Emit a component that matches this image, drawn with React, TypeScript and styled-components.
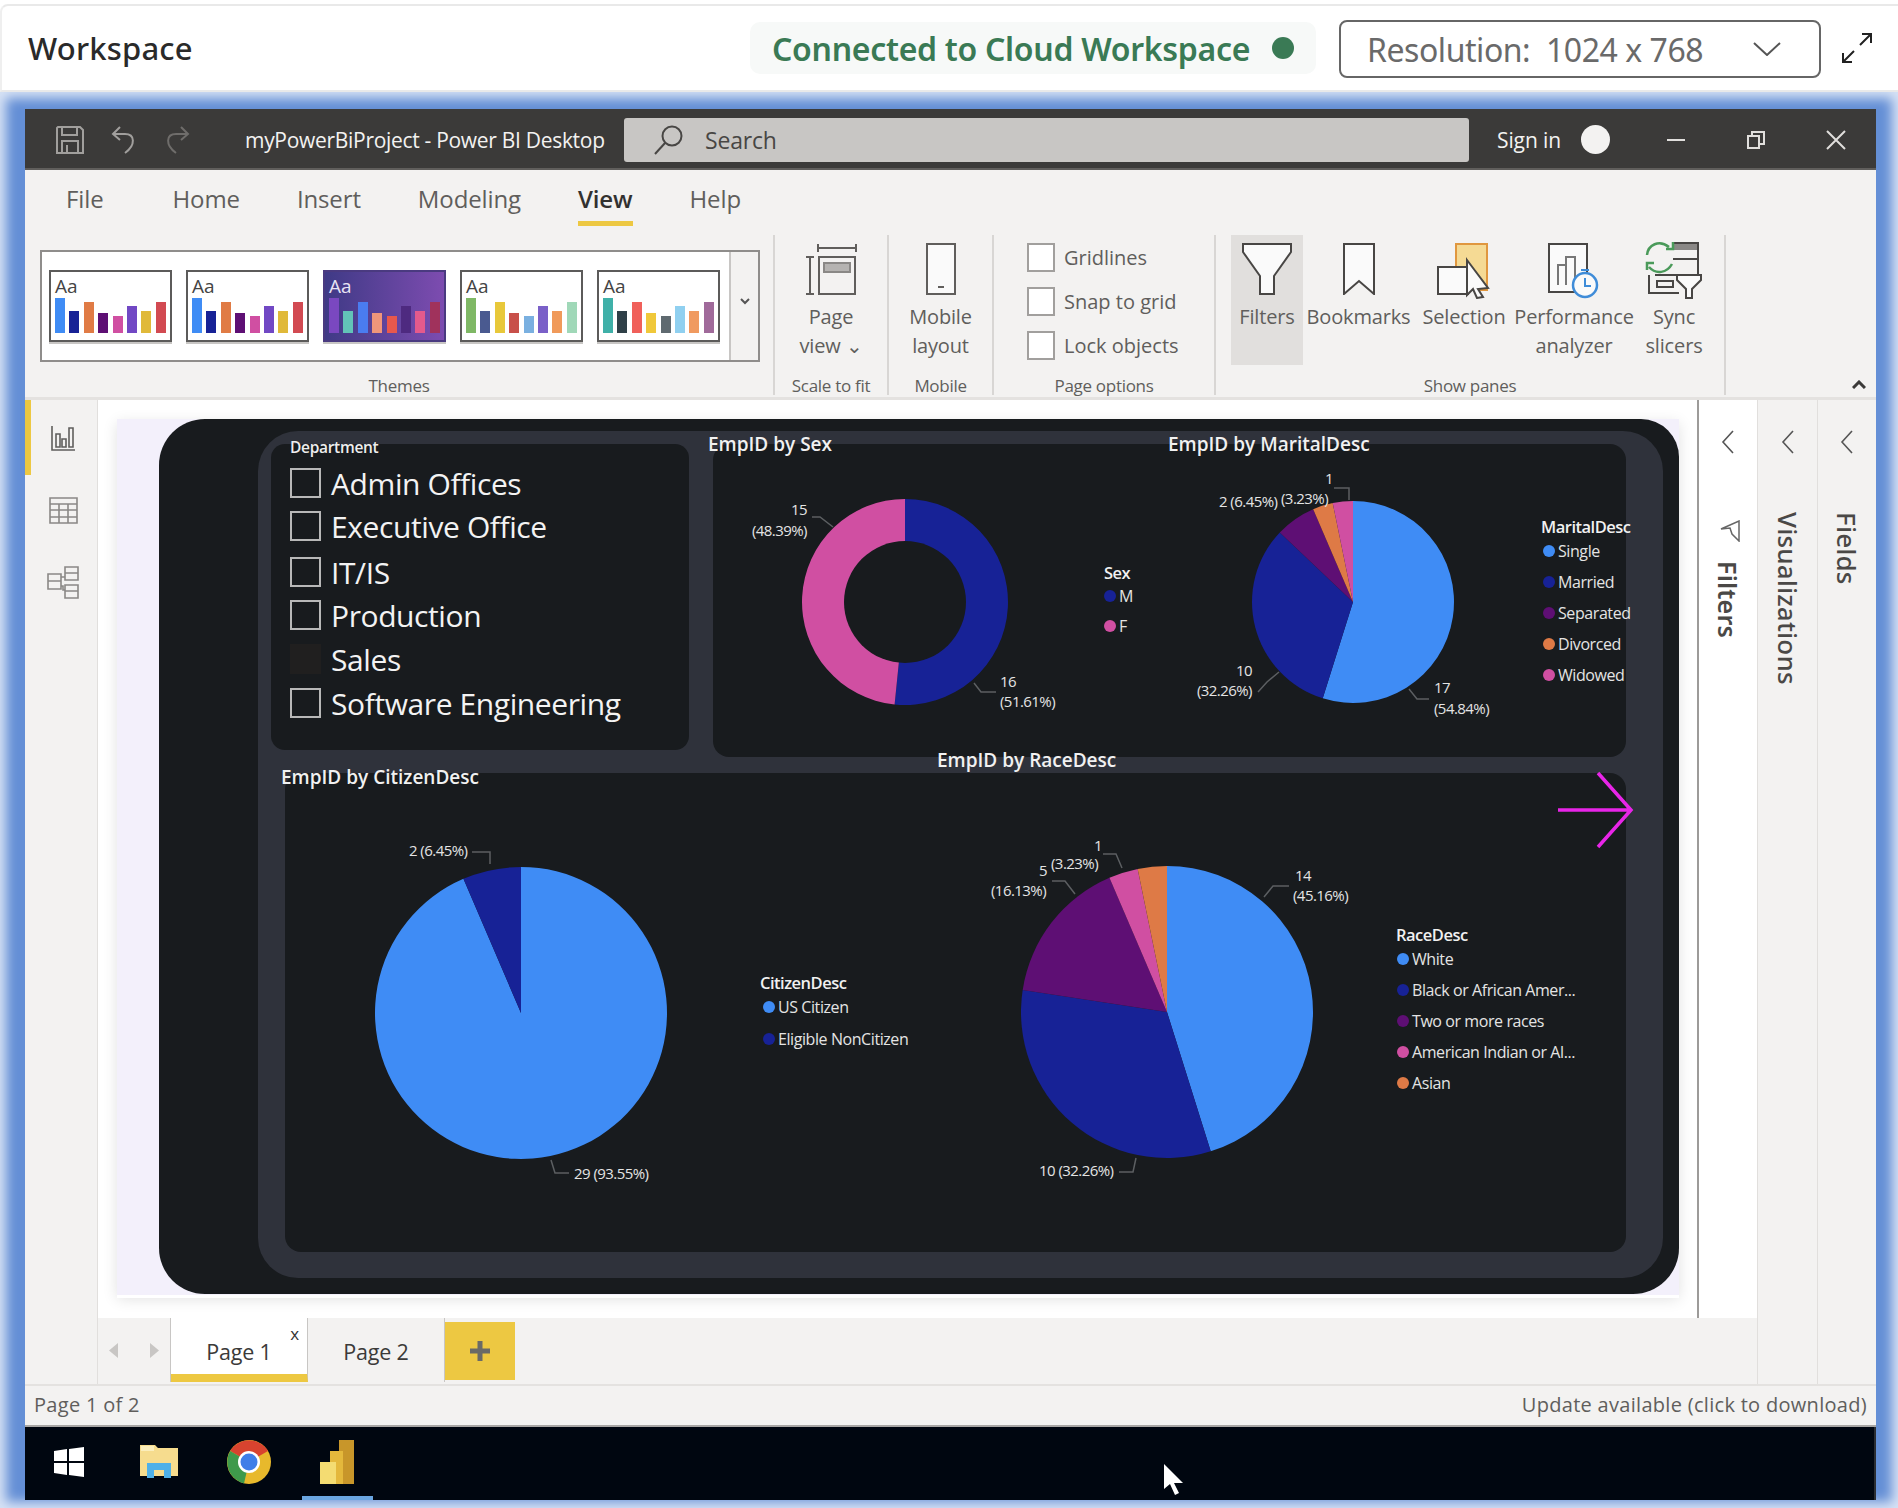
import React from "react";
import styled, { createGlobalStyle } from "styled-components";

const GlobalStyle = createGlobalStyle`
  html, body { margin: 0; padding: 0; background: #fff; }
  * { box-sizing: border-box; }
  body { font-family: "Open Sans", "Noto Sans", sans-serif; }
`;

const C = {
  sky: "#3f8cf5",
  navy: "#172296",
  purple: "#5e0f74",
  orange: "#de7a46",
  pink: "#d04fa2",
  dark: "#181b1e",
  slate: "#2f323b",
  ribbon: "#f3f2f1",
  text: "#605e5c",
  gold: "#edc842",
};

const Page = styled.div`
  width: 1898px;
  height: 1508px;
  padding-top: 4px;
  background: #fff;
  overflow: hidden;
`;

const Header = styled.header`
  height: 88px;
  display: flex;
  align-items: center;
  padding: 0 26px 0 28px;
  border-top: 2px solid #e9e9e9;
  border-bottom: 2px solid #e9e9e9;
  border-left: 2px solid #efefef;
  border-top-left-radius: 8px;
`;

const WorkspaceTitle = styled.h1`
  margin: 0 0 0 -2px;
  font-family: "Noto Sans", sans-serif;
  font-size: 31px;
  font-weight: 500;
  letter-spacing: 0.2px;
  color: #2a2a2a;
`;

const StatusPill = styled.div`
  margin-left: auto;
  width: 566px;
  height: 52px;
  display: flex;
  align-items: center;
  padding-left: 22px;
  gap: 22px;
  background: #f7f9f8;
  border-radius: 10px;
`;

const StatusText = styled.span`
  font-family: "Noto Sans", sans-serif;
  font-size: 32px;
  font-weight: 600;
  letter-spacing: -0.3px;
  color: #3a7a55;
  white-space: nowrap;
`;

const StatusDot = styled.span`
  width: 22px;
  height: 22px;
  border-radius: 50%;
  background: #3a7a55;
`;

const ResolutionBox = styled.div`
  width: 482px;
  height: 58px;
  margin: 2px 0 0 23px;
  display: flex;
  align-items: center;
  justify-content: space-between;
  padding: 0 38px 0 26px;
  border: 2px solid #666;
  border-radius: 8px;
  font-family: "Noto Sans", sans-serif;
  font-size: 32px;
  letter-spacing: -0.45px;
  color: #6a6a6a;
  white-space: pre;
`;

const ExpandButton = styled.div`
  margin-left: 21px;
  display: flex;
`;

const Frame = styled.div`
  height: 1416px;
  padding: 17px 22px 10px 25px;
  background: #648fd6;
  box-shadow: inset 0 0 12px 6px rgba(255, 255, 255, 0.75);
`;

const Window = styled.div`
  height: 1389px;
  display: flex;
  flex-direction: column;
  background: ${C.ribbon};
`;

const TitleBar = styled.div`
  height: 61px;
  flex: none;
  display: flex;
  align-items: center;
  padding: 2px 0 0 31px;
  background: #3b3a39;
  border-bottom: 2px solid #605e5c;
`;

const QuickIcons = styled.div`
  width: 137px;
  display: flex;
  align-items: center;
  gap: 27px;
`;

const AppTitle = styled.div`
  width: 431px;
  padding: 1px 0 0 52px;
  font-size: 21px;
  letter-spacing: -0.3px;
  color: #f3f2f1;
  white-space: nowrap;
`;

const SearchBox = styled.div`
  width: 845px;
  height: 44px;
  display: flex;
  align-items: center;
  gap: 21px;
  padding-left: 30px;
  background: #c8c6c4;
  border-radius: 3px;
  font-size: 23px;
  letter-spacing: -0.2px;
  color: #484644;
`;

const SignIn = styled.div`
  width: 84px;
  margin-left: 28px;
  padding-top: 1px;
  font-size: 21px;
  letter-spacing: -0.1px;
  color: #f3f2f1;
`;

const Avatar = styled.span`
  width: 29px;
  height: 29px;
  border-radius: 50%;
  background: #f3f2f1;
`;

const WinControls = styled.div`
  margin-left: auto;
  display: flex;
`;

const WinButton = styled.div`
  width: 80px;
  display: flex;
  align-items: center;
  justify-content: center;
`;

const Ribbon = styled.div`
  height: 230px;
  flex: none;
  border-bottom: 3px solid #e4e2e0;
`;

const MenuRow = styled.nav`
  height: 65px;
  display: flex;
  gap: 57px;
  padding: 12px 0 0 41px;
`;

const MenuItem = styled.div<{ $active?: boolean }>`
  height: 44px;
  font-size: 24px;
  line-height: 33px;
  letter-spacing: -0.12px;
  color: ${(p) => (p.$active ? "#323130" : C.text)};
  font-weight: ${(p) => (p.$active ? 600 : 400)};
  border-bottom: ${(p) => (p.$active ? `5px solid ${C.gold}` : "none")};
  &:first-child {
    margin-right: 12px;
  }
`;

const RibbonRow = styled.div`
  height: 162px;
  display: flex;
`;

const Group = styled.section<{ $w: number; $pl?: number; $pr?: number }>`
  width: ${(p) => p.$w}px;
  height: 160px;
  padding: 0 ${(p) => p.$pr ?? 0}px 0 ${(p) => p.$pl ?? 0}px;
  display: flex;
  flex-direction: column;
  border-right: 2px solid #d8d6d4;
`;

const GroupBody = styled.div`
  flex: 1;
  display: flex;
`;

const GroupLabel = styled.div`
  height: 22px;
  margin-bottom: -2px;
  text-align: center;
  font-size: 17px;
  line-height: 22px;
  letter-spacing: -0.3px;
  color: ${C.text};
  white-space: nowrap;
`;

const ThemeBox = styled.div`
  width: 720px;
  height: 112px;
  margin-top: 15px;
  flex: none;
  display: flex;
  padding-top: 18px;
  padding-left: 7px;
  gap: 14px;
  position: relative;
  background: #fff;
  border: 2px solid #8f8d8b;
`;

const ThemeThumb = styled.div<{ $dark?: boolean }>`
  width: 123px;
  height: 72px;
  display: flex;
  flex-direction: column;
  padding: 3px 3px 7px 4px;
  background: ${(p) => (p.$dark ? "linear-gradient(90deg, #3f3a86, #7d4cb0)" : "#fff")};
  border: 2px solid ${(p) => (p.$dark ? "#4a3a80" : "#5c5b5a")};
  box-shadow: 0 2px 0 #c8c6c4;
`;

const ThemeAa = styled.span<{ $dark?: boolean }>`
  height: 23px;
  font-size: 19px;
  line-height: 23px;
  color: ${(p) => (p.$dark ? "#e8e4f4" : "#444")};
`;

const ThemeBars = styled.div`
  flex: 1;
  display: flex;
  align-items: flex-end;
  gap: 4.4px;
`;

const ThemeBar = styled.span<{ $h: number; $c: string }>`
  width: 10px;
  height: ${(p) => p.$h}px;
  background: ${(p) => p.$c};
`;

const ThemeMore = styled.div`
  width: 29px;
  position: absolute;
  top: 0;
  right: 0;
  bottom: 0;
  display: flex;
  align-items: center;
  justify-content: center;
  padding-bottom: 10px;
  background: ${C.ribbon};
  border-left: 2px solid #c8c6c4;
`;

const LargeButton = styled.div<{ $w: number; $on?: boolean }>`
  width: ${(p) => p.$w}px;
  height: 130px;
  flex: none;
  display: flex;
  flex-direction: column;
  align-items: center;
  padding-top: 8px;
  background: ${(p) => (p.$on ? "#e1dfdd" : "transparent")};
`;

const IconSlot = styled.div`
  height: 59px;
  display: flex;
  align-items: flex-start;
  justify-content: center;
`;

const ButtonText = styled.div`
  font-size: 20px;
  line-height: 29px;
  letter-spacing: -0.15px;
  text-align: center;
  color: ${C.text};
  white-space: nowrap;
`;

const CheckList = styled.div`
  display: flex;
  flex-direction: column;
  gap: 15px;
  padding: 8px 0 0 33px;
`;

const CheckRow = styled.label`
  height: 29px;
  display: flex;
  align-items: center;
  gap: 9px;
  font-size: 20px;
  letter-spacing: 0;
  color: ${C.text};
`;

const CheckBox = styled.span`
  width: 28px;
  height: 29px;
  background: #fff;
  border: 2px solid #a19f9d;
`;

const CollapseRibbon = styled.div`
  margin-left: auto;
  margin-right: 10px;
  align-self: flex-end;
  padding-bottom: 8px;
  display: flex;
`;

const Workarea = styled.div`
  flex: 1;
  display: grid;
  grid-template-columns: 73px 1601px 58px 60px 59px;
  grid-template-rows: 918px 66px;
  border-bottom: 2px solid #e4e2e0;
`;

const Rail = styled.aside`
  grid-column: 1;
  grid-row: 1 / span 2;
  border-right: 1px solid #e1dfdd;
`;

const RailItem = styled.div<{ $active?: boolean; $h: number }>`
  height: ${(p) => p.$h}px;
  display: flex;
  align-items: center;
  justify-content: center;
  border-left: 6px solid ${(p) => (p.$active ? C.gold : "transparent")};
  padding-right: 2px;
`;

const CanvasArea = styled.main`
  grid-column: 2;
  grid-row: 1;
  padding: 19px 18px 23px 19px;
  background: #fff;
  border-right: 2px solid #9d9b99;
`;

const ReportPage = styled.div`
  height: 876px;
  padding-left: 42px;
  background: #f3f0fb;
  box-shadow: 0 3px 0 #fff, 0 4px 14px rgba(0, 0, 0, 0.12);
`;

const ReportBack = styled.div`
  height: 875px;
  padding: 12px 16px 16px 99px;
  background: ${C.dark};
  border-radius: 46px 38px 46px 46px;
`;

const ReportInner = styled.div`
  height: 847px;
  position: relative;
  display: flex;
  flex-direction: column;
  gap: 16px;
  padding: 13px 37px 0 13px;
  background: ${C.slate};
  border-radius: 40px;
`;

const TopRow = styled.div`
  height: 313px;
  display: flex;
  gap: 24px;
  align-items: flex-start;
`;

const SlicerCard = styled.div`
  width: 418px;
  height: 306px;
  flex: none;
  padding: 0 0 0 19px;
  background: ${C.dark};
  border-radius: 14px;
`;

const SlicerTitle = styled.div`
  height: 24px;
  font-size: 15.5px;
  line-height: 7px;
  font-weight: 600;
  letter-spacing: -0.3px;
  color: #eee;
`;

const SlicerRow = styled.div<{ $gap: number }>`
  height: 30px;
  margin-bottom: ${(p) => p.$gap}px;
  display: flex;
  align-items: center;
  gap: 10px;
  font-size: 30px;
  letter-spacing: -0.4px;
  color: #f3f3f3;
  white-space: nowrap;
`;

const SlicerBox = styled.span<{ $muted?: boolean }>`
  width: 31px;
  height: 30px;
  background: ${(p) => (p.$muted ? "#201f1f" : "transparent")};
  border: ${(p) => (p.$muted ? "none" : "2px solid #b8b8b8")};
`;

const ChartCard = styled.div<{ $w: number; $h: number }>`
  width: ${(p) => p.$w}px;
  height: ${(p) => p.$h}px;
  flex: none;
  display: flex;
  background: ${C.dark};
  border-radius: 16px;
`;

const BottomCard = styled(ChartCard)`
  margin-left: 14px;
`;

const Visual = styled.div<{ $w: number }>`
  width: ${(p) => p.$w}px;
  flex: none;
`;

const VisualTitle = styled.div<{ $top: number; $left?: number }>`
  height: 21px;
  margin-top: ${(p) => p.$top}px;
  margin-left: ${(p) => p.$left ?? 0}px;
  font-size: 19px;
  line-height: 20px;
  font-weight: 600;
  letter-spacing: 0;
  color: #f1f1f1;
  white-space: nowrap;
`;

const VisualBody = styled.div`
  display: flex;
  align-items: flex-start;
  svg {
    display: block;
    flex: none;
    overflow: visible;
  }
`;

const Legend = styled.div<{ $top: number; $pl: number }>`
  margin-top: ${(p) => p.$top}px;
  flex: none;
  --legend-pl: ${(p) => p.$pl}px;
`;

const LegendTitle = styled.div`
  height: 20px;
  margin-bottom: -2px;
  font-size: 16.5px;
  line-height: 20px;
  font-weight: 600;
  letter-spacing: -0.5px;
  color: #f1f1f1;
  white-space: nowrap;
`;

const LegendItem = styled.div<{ $pitch: number }>`
  height: ${(p) => p.$pitch}px;
  display: flex;
  align-items: center;
  padding-left: var(--legend-pl);
  gap: 3px;
  font-size: 16px;
  letter-spacing: -0.42px;
  color: #e4e4e4;
  white-space: nowrap;
`;

const LegendDot = styled.span<{ $c: string }>`
  width: 12px;
  height: 12px;
  flex: none;
  border-radius: 50%;
  background: ${(p) => p.$c};
`;

const PieText = styled.text`
  font-size: 15px;
  letter-spacing: -0.55px;
  fill: #e4e4e4;
  dominant-baseline: middle;
`;

const Leader = styled.polyline`
  fill: none;
  stroke: #5c5f62;
  stroke-width: 1.5;
`;

const NextArrow = styled.svg`
  position: absolute;
  left: 1299px;
  top: 340px;
`;

const Pane = styled.aside<{ $bg: string; $col: number; $span?: boolean }>`
  grid-column: ${(p) => p.$col};
  grid-row: ${(p) => (p.$span ? "1 / span 2" : "1")};
  display: flex;
  flex-direction: column;
  align-items: center;
  padding-top: 30px;
  background: ${(p) => p.$bg};
  border-left: ${(p) => (p.$span ? "1px solid #e1dfdd" : "none")};
`;

const PaneLabel = styled.div<{ $top: number; $bold?: boolean }>`
  margin-top: ${(p) => p.$top}px;
  writing-mode: vertical-rl;
  font-family: "Noto Sans", sans-serif;
  font-size: ${(p) => (p.$bold ? 25 : 26)}px;
  line-height: 30px;
  font-weight: ${(p) => (p.$bold ? 600 : 500)};
  letter-spacing: 0.2px;
  color: #4a4846;
`;

const PaneIcon = styled.div`
  margin: 66px 0 0 4px;
  display: flex;
`;

const PageTabs = styled.div`
  grid-column: 2 / span 2;
  grid-row: 2;
  display: flex;
  align-items: flex-start;
  background: ${C.ribbon};
`;

const TabNav = styled.div`
  width: 73px;
  height: 64px;
  display: flex;
  align-items: center;
  justify-content: center;
  gap: 32px;
  border-right: 1px solid #c8c6c4;
`;

const PageTab = styled.div<{ $active?: boolean }>`
  width: 137px;
  height: 64px;
  position: relative;
  display: flex;
  justify-content: center;
  padding-top: 19px;
  font-size: 21.5px;
  line-height: 29px;
  letter-spacing: -0.2px;
  color: #3b3a39;
  background: ${(p) => (p.$active ? "#fff" : "transparent")};
  border-right: 1px solid #c8c6c4;
  border-bottom: ${(p) => (p.$active ? `8px solid ${C.gold}` : "none")};
`;

const TabClose = styled.span`
  position: absolute;
  top: 7px;
  right: 8px;
  font-size: 17px;
  line-height: 17px;
  color: #333;
`;

const AddTab = styled.div`
  width: 70px;
  height: 58px;
  margin-top: 4px;
  display: flex;
  align-items: center;
  justify-content: center;
  background: ${C.gold};
`;

const StatusBar = styled.footer`
  height: 41px;
  flex: none;
  display: flex;
  align-items: center;
  justify-content: space-between;
  padding: 0 9px 2px 9px;
  border-bottom: 2px solid #a8a6a4;
  font-size: 20px;
  letter-spacing: 0.3px;
  color: ${C.text};
`;

const Taskbar = styled.div`
  height: 73px;
  flex: none;
  position: relative;
  display: grid;
  grid-template-columns: 88px 92px 88px 88px;
  background: #000610;
  border-right: 2px solid #2b2d31;
`;

const TaskItem = styled.div<{ $active?: boolean }>`
  height: 73px;
  display: flex;
  align-items: center;
  justify-content: center;
  position: relative;
  padding-bottom: 4px;
  &::after {
    content: "";
    display: ${(p) => (p.$active ? "block" : "none")};
    position: absolute;
    left: 9px;
    right: 8px;
    bottom: 0;
    height: 4px;
    background: #6aa5e0;
  }
`;

const MousePointer = styled.svg`
  position: absolute;
  left: 1138px;
  top: 37px;
`;

type Slice = { pct: number; color: string };

const polar = (cx: number, cy: number, r: number, pct: number) => {
  const a = (pct / 100) * Math.PI * 2;
  return `${cx + r * Math.sin(a)} ${cy - r * Math.cos(a)}`;
};

function Pie({ cx, cy, r, slices }: { cx: number; cy: number; r: number; slices: Slice[] }) {
  let start = 0;
  return (
    <>
      {slices.map((s) => {
        const end = start + s.pct;
        const d = `M${cx} ${cy}L${polar(cx, cy, r, start)}A${r} ${r} 0 ${s.pct > 50 ? 1 : 0} 1 ${polar(cx, cy, r, end)}Z`;
        start = end;
        return <path key={s.color} d={d} fill={s.color} />;
      })}
    </>
  );
}

const themes = [
  { colors: [C.sky, C.navy, "#e07b45", C.purple, C.pink, "#7148c4", "#e0b93a", "#d24a52"] },
  { colors: [C.sky, C.navy, "#e07b45", C.purple, C.pink, "#7148c4", "#e0b93a", "#d24a52"] },
  { dark: true, colors: ["#7a48c0", "#62c3b8", "#4a7cf0", "#f0967a", "#e8584c", "#4e2a80", "#e45a8c", "#a0325c"] },
  { colors: ["#7fb865", "#4a5a90", "#e8c83a", "#c8504a", "#7ab0e0", "#7a60c8", "#f09a5a", "#a0d8b8"] },
  { colors: ["#3fb0a8", "#2f4048", "#f0605a", "#f0c83a", "#5f6a70", "#90d0f0", "#f09a60", "#a06a9a"] },
];
const barHeights = [35, 22, 31, 20, 17, 27, 22, 31];

const departments = [
  { name: "Admin Offices", gap: 13 },
  { name: "Executive Office", gap: 16 },
  { name: "IT/IS", gap: 13 },
  { name: "Production", gap: 14 },
  { name: "Sales", gap: 14, muted: true },
  { name: "Software Engineering", gap: 0 },
];

const stroke = "#605e5c";

function App() {
  return (
    <Page>
      <GlobalStyle />
      <Header>
        <WorkspaceTitle>Workspace</WorkspaceTitle>
        <StatusPill>
          <StatusText>Connected to Cloud Workspace</StatusText>
          <StatusDot />
        </StatusPill>
        <ResolutionBox>
          <span>Resolution:  1024 x 768</span>
          <svg width="28" height="14" viewBox="0 0 28 14" fill="none" stroke="#555" strokeWidth="2">
            <path d="M1 1l13 12L27 1" />
          </svg>
        </ResolutionBox>
        <ExpandButton>
          <svg width="30" height="30" viewBox="0 0 30 30" fill="none" stroke="#222" strokeWidth="2">
            <path d="M18 12L29 1M20 1h9v9M12 18L1 29M1 20v9h9" />
          </svg>
        </ExpandButton>
      </Header>

      <Frame>
        <Window>
          <TitleBar>
            <QuickIcons>
              <svg width="28" height="28" viewBox="0 0 28 28" fill="none" stroke="#a19f9d" strokeWidth="2">
                <path d="M2 1h22l3 3v23H1V2zM6 1v8h15V1M6 27V15h16v12M11 19v8" />
              </svg>
              <svg width="26" height="28" viewBox="0 0 26 28" fill="none" stroke="#a19f9d" strokeWidth="2">
                <path d="M9 1L2 8l7 6M2 8h12c10 0 11 11 0 19" />
              </svg>
              <svg width="26" height="28" viewBox="0 0 26 28" fill="none" stroke="#6f6d6b" strokeWidth="2">
                <path d="M17 1l7 7-7 6M24 8H12C2 8 1 19 12 27" />
              </svg>
            </QuickIcons>
            <AppTitle>myPowerBiProject - Power BI Desktop</AppTitle>
            <SearchBox>
              <svg width="30" height="30" viewBox="0 0 30 30" fill="none" stroke="#484644" strokeWidth="2">
                <circle cx="18" cy="11" r="9.5" />
                <path d="M11 18L1 29" />
              </svg>
              Search
            </SearchBox>
            <SignIn>Sign in</SignIn>
            <Avatar />
            <WinControls>
              <WinButton>
                <svg width="20" height="4" viewBox="0 0 20 4"><path d="M1 2h18" stroke="#e1dfdd" strokeWidth="2" /></svg>
              </WinButton>
              <WinButton>
                <svg width="18" height="18" viewBox="0 0 18 18" fill="none" stroke="#e1dfdd" strokeWidth="2">
                  <path d="M1 5h11v12H1zM5 5V1h12v12h-5" />
                </svg>
              </WinButton>
              <WinButton>
                <svg width="20" height="20" viewBox="0 0 20 20" stroke="#e1dfdd" strokeWidth="2">
                  <path d="M1 1l18 18M19 1L1 19" />
                </svg>
              </WinButton>
            </WinControls>
          </TitleBar>

          <Ribbon>
            <MenuRow>
              <MenuItem>File</MenuItem>
              <MenuItem>Home</MenuItem>
              <MenuItem>Insert</MenuItem>
              <MenuItem>Modeling</MenuItem>
              <MenuItem $active>View</MenuItem>
              <MenuItem>Help</MenuItem>
            </MenuRow>
            <RibbonRow>
              <Group $w={750} $pl={15} $pr={15}>
                <GroupBody>
                  <ThemeBox>
                    {themes.map((t, i) => (
                      <ThemeThumb key={i} $dark={t.dark}>
                        <ThemeAa $dark={t.dark}>Aa</ThemeAa>
                        <ThemeBars>
                          {t.colors.map((c, j) => (
                            <ThemeBar key={j} $h={barHeights[j]} $c={c} />
                          ))}
                        </ThemeBars>
                      </ThemeThumb>
                    ))}
                    <ThemeMore>
                      <svg width="10" height="7" viewBox="0 0 10 7" fill="none" stroke="#555" strokeWidth="2">
                        <path d="M1 1l4 4 4-4" />
                      </svg>
                    </ThemeMore>
                  </ThemeBox>
                </GroupBody>
                <GroupLabel>Themes</GroupLabel>
              </Group>

              <Group $w={114}>
                <GroupBody>
                  <LargeButton $w={112}>
                    <IconSlot>
                      <svg width="52" height="52" viewBox="0 0 52 52" fill="none" stroke={stroke} strokeWidth="2">
                        <path d="M13 1v8M51 1v8M13 5h38M1 14h8M1 51h8M5 14v37M14 14h36v37H14z" />
                        <rect x="19" y="20" width="26" height="9" fill="#b5b3b1" stroke="#8a8886" />
                      </svg>
                    </IconSlot>
                    <ButtonText>
                      Page
                      <br />
                      view ⌄
                    </ButtonText>
                  </LargeButton>
                </GroupBody>
                <GroupLabel>Scale to fit</GroupLabel>
              </Group>

              <Group $w={105}>
                <GroupBody>
                  <LargeButton $w={103}>
                    <IconSlot>
                      <svg width="30" height="52" viewBox="0 0 30 52" fill="#fafafa" stroke={stroke} strokeWidth="2">
                        <path d="M1 1h28v50H1zM12 44h6" />
                      </svg>
                    </IconSlot>
                    <ButtonText>
                      Mobile
                      <br />
                      layout
                    </ButtonText>
                  </LargeButton>
                </GroupBody>
                <GroupLabel>Mobile</GroupLabel>
              </Group>

              <Group $w={222}>
                <GroupBody>
                  <CheckList>
                    <CheckRow><CheckBox />Gridlines</CheckRow>
                    <CheckRow><CheckBox />Snap to grid</CheckRow>
                    <CheckRow><CheckBox />Lock objects</CheckRow>
                  </CheckList>
                </GroupBody>
                <GroupLabel>Page options</GroupLabel>
              </Group>

              <Group $w={510} $pl={15} $pr={15}>
                <GroupBody>
                  <LargeButton $w={72} $on>
                    <IconSlot>
                      <svg width="50" height="52" viewBox="0 0 50 52" fill="#fafafa" stroke="#484644" strokeWidth="2">
                        <path d="M1 1h48v8L32 33v18H18V33L1 9z" />
                      </svg>
                    </IconSlot>
                    <ButtonText>Filters</ButtonText>
                  </LargeButton>
                  <LargeButton $w={111}>
                    <IconSlot>
                      <svg width="32" height="52" viewBox="0 0 32 52" fill="#fafafa" stroke="#484644" strokeWidth="2">
                        <path d="M1 1h30v50L16 38 1 51z" />
                      </svg>
                    </IconSlot>
                    <ButtonText>Bookmarks</ButtonText>
                  </LargeButton>
                  <LargeButton $w={100}>
                    <IconSlot>
                      <svg width="54" height="56" viewBox="0 0 54 56" fill="none">
                        <rect x="19" y="1" width="31" height="46" fill="#f5da94" stroke="#e0973f" strokeWidth="2" />
                        <rect x="1" y="24" width="30" height="27" fill="#fafafa" stroke="#484644" strokeWidth="2" />
                        <path d="M30 17l21 28-10 1 5 8-6 1-4-9-6 6z" fill="#fafafa" stroke="#484644" strokeWidth="2" />
                      </svg>
                    </IconSlot>
                    <ButtonText>Selection</ButtonText>
                  </LargeButton>
                  <LargeButton $w={120}>
                    <IconSlot>
                      <svg width="52" height="56" viewBox="0 0 52 56" fill="none">
                        <path d="M1 1h38v48H1z" fill="#fafafa" stroke="#484644" strokeWidth="2" />
                        <path d="M10 42V22h8v20M18 42V14h9v28" stroke="#777" strokeWidth="2" />
                        <circle cx="37" cy="42" r="12" fill="#fafafa" stroke="#3f8cd8" strokeWidth="2.5" />
                        <path d="M37 35v8h6M33 27h8" stroke="#3f8cd8" strokeWidth="2" />
                      </svg>
                    </IconSlot>
                    <ButtonText>
                      Performance
                      <br />
                      analyzer
                    </ButtonText>
                  </LargeButton>
                  <LargeButton $w={80}>
                    <IconSlot>
                      <svg width="58" height="60" viewBox="0 0 58 60" fill="none" style={{ marginTop: -4 }}>
                        <rect x="28" y="4" width="25" height="7" fill="#8a8886" />
                        <path d="M28 4h25v32M28 20h25M10 36h36M4 36v18h30" stroke="#484644" strokeWidth="2" />
                        <path d="M12 42h16v6H12z" stroke="#484644" strokeWidth="2" />
                        <path d="M32 36h24v5L47 50v9h-6v-9l-9-9z" fill="#fafafa" stroke="#484644" strokeWidth="2" />
                        <path d="M24 8C14 0 3 6 2 16M4 28c7 8 18 6 23-3M21 10h7V3M9 24H2v7" stroke="#4a9a5a" strokeWidth="2.5" />
                      </svg>
                    </IconSlot>
                    <ButtonText>
                      Sync
                      <br />
                      slicers
                    </ButtonText>
                  </LargeButton>
                </GroupBody>
                <GroupLabel>Show panes</GroupLabel>
              </Group>
              <CollapseRibbon>
                <svg width="14" height="9" viewBox="0 0 14 9" fill="none" stroke="#3b3a39" strokeWidth="3">
                  <path d="M1 8l6-6 6 6" />
                </svg>
              </CollapseRibbon>
            </RibbonRow>
          </Ribbon>

          <Workarea>
            <Rail>
              <RailItem $active $h={75}>
                <svg width="24" height="26" viewBox="0 0 24 26" fill="none" stroke="#5f5e5c" strokeWidth="1.6">
                  <path d="M1 1v24h23M5 9h4v13H5zM11 14h4v8h-4zM18 3h4v19h-4z" />
                </svg>
              </RailItem>
              <RailItem $h={70}>
                <svg width="29" height="27" viewBox="0 0 29 27" fill="none" stroke="#8a8886" strokeWidth="1.6">
                  <path d="M1 1h27v25H1zM1 7h27M1 13h27M1 20h27M10 7v19M19 7v19" />
                </svg>
              </RailItem>
              <RailItem $h={75}>
                <svg width="32" height="33" viewBox="0 0 32 33" fill="none" stroke="#8a8886" strokeWidth="1.6">
                  <path d="M18 1h13v13H18zM18 7h13M18 19h13v13H18zM18 25h13M1 8h13v15H1zM1 15h13M14 11h4M14 20h2v4h2" />
                </svg>
              </RailItem>
            </Rail>

            <CanvasArea>
              <ReportPage>
                <ReportBack>
                  <ReportInner>
                    <TopRow>
                      <SlicerCard>
                        <SlicerTitle>Department</SlicerTitle>
                        {departments.map((d) => (
                          <SlicerRow key={d.name} $gap={d.gap}>
                            <SlicerBox $muted={d.muted} />
                            {d.name}
                          </SlicerRow>
                        ))}
                      </SlicerCard>

                      <ChartCard $w={913} $h={313}>
                        <Visual $w={455}>
                          <VisualTitle $top={-10} $left={-5}>EmpID by Sex</VisualTitle>
                          <VisualBody>
                            <svg width="391" height="290" viewBox="713 455 391 290">
                              <Pie cx={905} cy={602} r={103} slices={[{ pct: 51.61, color: C.navy }, { pct: 48.39, color: C.pink }]} />
                              <circle cx="905" cy="602" r="61" fill={C.dark} />
                              <PieText x={807} y={511} textAnchor="end">15</PieText>
                              <PieText x={807} y={532} textAnchor="end">(48.39%)</PieText>
                              <Leader points="812,517 820,517 833,527" />
                              <PieText x={1000} y={683}>16</PieText>
                              <PieText x={1000} y={703}>(51.61%)</PieText>
                              <Leader points="974,683 981,692 996,692" />
                            </svg>
                            <Legend $top={108} $pl={0}>
                              <LegendTitle>Sex</LegendTitle>
                              <LegendItem $pitch={30}><LegendDot $c={C.navy} />M</LegendItem>
                              <LegendItem $pitch={30}><LegendDot $c={C.pink} />F</LegendItem>
                            </Legend>
                          </VisualBody>
                        </Visual>
                        <Visual $w={458}>
                          <VisualTitle $top={-10}>EmpID by MaritalDesc</VisualTitle>
                          <VisualBody>
                            <svg width="373" height="290" viewBox="1168 455 373 290">
                              <Pie
                                cx={1353}
                                cy={602}
                                r={101}
                                slices={[
                                  { pct: 54.84, color: C.sky },
                                  { pct: 32.26, color: C.navy },
                                  { pct: 6.45, color: C.purple },
                                  { pct: 3.23, color: C.orange },
                                  { pct: 3.22, color: C.pink },
                                ]}
                              />
                              <PieText x={1325} y={480}>1</PieText>
                              <Leader points="1334,488 1349,488 1349,500" />
                              <PieText x={1281} y={500}>(3.23%)</PieText>
                              <PieText x={1219} y={503}>2 (6.45%)</PieText>
                              <PieText x={1252} y={672} textAnchor="end">10</PieText>
                              <PieText x={1252} y={692} textAnchor="end">(32.26%)</PieText>
                              <Leader points="1258,692 1267,682 1279,672" />
                              <PieText x={1434} y={689}>17</PieText>
                              <PieText x={1434} y={710}>(54.84%)</PieText>
                              <Leader points="1409,689 1417,699 1429,699" />
                            </svg>
                            <Legend $top={62} $pl={2}>
                              <LegendTitle>MaritalDesc</LegendTitle>
                              {[
                                ["Single", C.sky],
                                ["Married", C.navy],
                                ["Separated", C.purple],
                                ["Divorced", C.orange],
                                ["Widowed", C.pink],
                              ].map(([n, c]) => (
                                <LegendItem key={n} $pitch={31}><LegendDot $c={c} />{n}</LegendItem>
                              ))}
                            </Legend>
                          </VisualBody>
                        </Visual>
                      </ChartCard>
                    </TopRow>

                    <BottomCard $w={1341} $h={479}>
                      <Visual $w={652}>
                        <VisualTitle $top={-6} $left={-4}>EmpID by CitizenDesc</VisualTitle>
                        <VisualBody>
                          <svg width="475" height="430" viewBox="285 788 475 430">
                            <Pie cx={521} cy={1013} r={146} slices={[{ pct: 93.55, color: C.sky }, { pct: 6.45, color: C.navy }]} />
                            <PieText x={409} y={852}>2 (6.45%)</PieText>
                            <Leader points="472,852 490,852 490,864" />
                            <PieText x={574} y={1175}>29 (93.55%)</PieText>
                            <Leader points="551,1160 555,1173 569,1173" />
                          </svg>
                          <Legend $top={185} $pl={3}>
                            <LegendTitle>CitizenDesc</LegendTitle>
                            <LegendItem $pitch={32}><LegendDot $c={C.sky} />US Citizen</LegendItem>
                            <LegendItem $pitch={32}><LegendDot $c={C.navy} />Eligible NonCitizen</LegendItem>
                          </Legend>
                        </VisualBody>
                      </Visual>
                      <Visual $w={689}>
                        <VisualTitle $top={-23}>EmpID by RaceDesc</VisualTitle>
                        <VisualBody>
                          <svg width="459" height="450" viewBox="937 771 459 450">
                            <Pie
                              cx={1167}
                              cy={1012}
                              r={146}
                              slices={[
                                { pct: 45.16, color: C.sky },
                                { pct: 32.26, color: C.navy },
                                { pct: 16.13, color: C.purple },
                                { pct: 3.23, color: C.pink },
                                { pct: 3.22, color: C.orange },
                              ]}
                            />
                            <PieText x={1094} y={847}>1</PieText>
                            <PieText x={1051} y={865}>(3.23%)</PieText>
                            <Leader points="1103,854 1116,854 1122,868" />
                            <PieText x={1039} y={872}>5</PieText>
                            <PieText x={991} y={892}>(16.13%)</PieText>
                            <Leader points="1052,881 1065,881 1075,894" />
                            <PieText x={1295} y={877}>14</PieText>
                            <PieText x={1293} y={897}>(45.16%)</PieText>
                            <Leader points="1289,886 1273,886 1264,897" />
                            <PieText x={1039} y={1172}>10 (32.26%)</PieText>
                            <Leader points="1119,1172 1133,1172 1136,1158" />
                          </svg>
                          <Legend $top={154} $pl={1}>
                            <LegendTitle>RaceDesc</LegendTitle>
                            {[
                              ["White", C.sky],
                              ["Black or African Amer...", C.navy],
                              ["Two or more races", C.purple],
                              ["American Indian or Al...", C.pink],
                              ["Asian", C.orange],
                            ].map(([n, c]) => (
                              <LegendItem key={n} $pitch={31}><LegendDot $c={c} />{n}</LegendItem>
                            ))}
                          </Legend>
                        </VisualBody>
                      </Visual>
                    </BottomCard>

                    <NextArrow width="78" height="78" viewBox="0 0 78 78" fill="none" stroke="#e825e8" strokeWidth="3.5">
                      <path d="M1 39h73M41 2l33 37-33 37" />
                    </NextArrow>
                  </ReportInner>
                </ReportBack>
              </ReportPage>
            </CanvasArea>

            <Pane $bg="#fff" $col={3}>
              <svg width="14" height="24" viewBox="0 0 14 24" fill="none" stroke="#555" strokeWidth="1.6"><path d="M12 1L2 12l10 11" /></svg>
              <PaneIcon>
                <svg width="20" height="22" viewBox="0 0 20 22" fill="none" stroke="#666" strokeWidth="1.5">
                  <path d="M1 9l18-8v20l-7-7-2-6z" />
                </svg>
              </PaneIcon>
              <PaneLabel $top={19} $bold>Filters</PaneLabel>
            </Pane>
            <Pane $bg={C.ribbon} $col={4} $span>
              <svg width="14" height="24" viewBox="0 0 14 24" fill="none" stroke="#555" strokeWidth="1.6"><path d="M12 1L2 12l10 11" /></svg>
              <PaneLabel $top={58}>Visualizations</PaneLabel>
            </Pane>
            <Pane $bg={C.ribbon} $col={5} $span>
              <svg width="14" height="24" viewBox="0 0 14 24" fill="none" stroke="#555" strokeWidth="1.6"><path d="M12 1L2 12l10 11" /></svg>
              <PaneLabel $top={58}>Fields</PaneLabel>
            </Pane>

            <PageTabs>
              <TabNav>
                <svg width="9" height="15" viewBox="0 0 9 15" fill="#c8c6c4"><path d="M9 0v15L0 7.5z" /></svg>
                <svg width="9" height="15" viewBox="0 0 9 15" fill="#c8c6c4"><path d="M0 0v15l9-7.5z" /></svg>
              </TabNav>
              <PageTab $active>
                Page 1
                <TabClose>x</TabClose>
              </PageTab>
              <PageTab>Page 2</PageTab>
              <AddTab>
                <svg width="20" height="20" viewBox="0 0 20 20" stroke="#6a6a66" strokeWidth="5">
                  <path d="M10 0v20M0 10h20" />
                </svg>
              </AddTab>
            </PageTabs>
          </Workarea>

          <StatusBar>
            <span>Page 1 of 2</span>
            <span>Update available (click to download)</span>
          </StatusBar>

          <Taskbar>
            <TaskItem>
              <svg width="30" height="30" viewBox="0 0 30 30" fill="#fff">
                <path d="M0 4l13-2v12H0zM15 2l15-2v14H15zM0 16h13v12L0 26zM15 16h15v14l-15-2z" />
              </svg>
            </TaskItem>
            <TaskItem>
              <svg width="40" height="34" viewBox="0 0 40 34">
                <path d="M1 0h15l3 3h20v28H1z" fill="#f6dc8e" />
                <path d="M2 1h13v5H2z" fill="#fbeebc" />
                <path d="M8 33V18h24v15h-7v-8H15v8z" fill="#4fb0e8" />
              </svg>
            </TaskItem>
            <TaskItem>
              <svg width="44" height="44" viewBox="0 0 44 44">
                <circle cx="22" cy="22" r="22" fill="#e8b92c" />
                <path d="M22 22L3.2 11A22 22 0 0 1 41 11z" fill="#d8432f" />
                <path d="M22 22L3.2 11A22 22 0 0 0 17 43.4z" fill="#3f9a4b" />
                <circle cx="22" cy="22" r="11" fill="#fff" />
                <circle cx="22" cy="22" r="8.5" fill="#3f7ee8" />
              </svg>
            </TaskItem>
            <TaskItem $active>
              <svg width="34" height="44" viewBox="0 0 34 44">
                <path d="M19 0h15v44H19z" fill="#c8962a" />
                <path d="M10 11h13v33H10z" fill="#e4b83c" />
                <path d="M0 22h16v22H0z" fill="#f4dc72" />
              </svg>
            </TaskItem>
            <MousePointer width="21" height="31" viewBox="0 0 21 31" fill="#fff">
              <path d="M1 0v25l6-5 5 11 4-2-5-10h9z" />
            </MousePointer>
          </Taskbar>
        </Window>
      </Frame>
    </Page>
  );
}

export default App;
